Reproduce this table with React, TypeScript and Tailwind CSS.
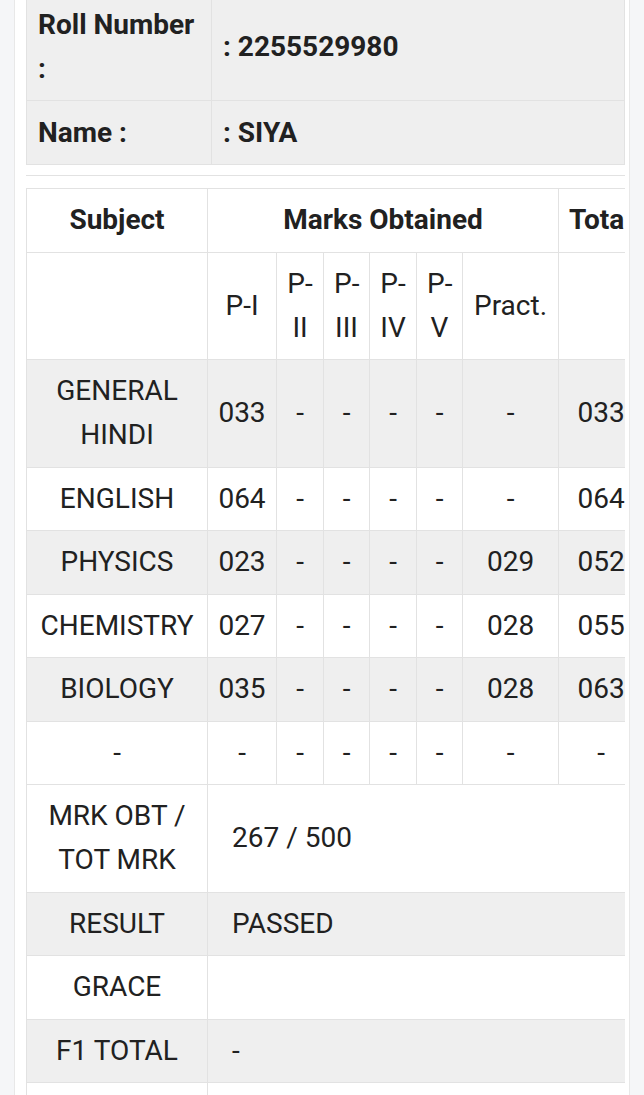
const papers = ['P-I', 'P-II', 'P-III', 'P-IV', 'P-V']

const subjects = [
    { name: 'GENERAL HINDI', p1: '033', pract: '-', total: '033' },
    { name: 'ENGLISH', p1: '064', pract: '-', total: '064' },
    { name: 'PHYSICS', p1: '023', pract: '029', total: '052' },
    { name: 'CHEMISTRY', p1: '027', pract: '028', total: '055' },
    { name: 'BIOLOGY', p1: '035', pract: '028', total: '063' },
    { name: '-', p1: '-', pract: '-', total: '-' },
]

const summary = [
    { label: 'MRK OBT / TOT MRK', value: '267 / 500' },
    { label: 'RESULT', value: 'PASSED' },
    { label: 'GRACE', value: '' },
    { label: 'F1 TOTAL', value: '-' },
    { label: '', value: '' },
]

const cell = 'border border-[#e2e2e2] px-[10px] py-[9.25px] text-center align-middle'

export default function App() {
    return (
        <div className="min-h-screen overflow-hidden bg-[#f5f6f8] px-[14px] text-[28px] leading-[44px] text-[#212121]" style={{ fontFamily: 'Roboto, "Noto Sans", Arial, sans-serif' }}>
            <div className="-mt-[8px] min-h-screen border-x border-[#e8e8e8] bg-white pl-[11px] pr-[4px]">
                {/* student info */}
                <table className="w-full table-fixed border-collapse font-bold">
                    <colgroup>
                        <col className="w-[185px]" />
                        <col />
                    </colgroup>
                    <tbody>
                        <tr className="bg-[#efefef]">
                            <td className="border border-[#e2e2e2] px-[11px] py-[9.5px] align-top">Roll Number :</td>
                            <td className="border border-[#e2e2e2] px-[11px] py-[9.5px] align-middle">: 2255529980</td>
                        </tr>
                        <tr className="bg-[#efefef]">
                            <td className="border border-[#e2e2e2] px-[11px] py-[9.5px]">Name :</td>
                            <td className="border border-[#e2e2e2] px-[11px] py-[9.5px]">: SIYA</td>
                        </tr>
                    </tbody>
                </table>
                <div className="h-[11px] border-b border-[#e2e2e2]" />

                {/* marks */}
                <div className="mt-[12px] overflow-hidden">
                    <table className="w-[621px] table-fixed border-collapse">
                        <colgroup>
                            <col className="w-[181px]" />
                            <col className="w-[69px]" />
                            <col className="w-[47px]" />
                            <col className="w-[46px]" />
                            <col className="w-[47px]" />
                            <col className="w-[46px]" />
                            <col className="w-[96px]" />
                            <col className="w-[89px]" />
                        </colgroup>
                        <thead>
                            <tr>
                                <th className={cell}>Subject</th>
                                <th className={cell} colSpan={6}>Marks Obtained</th>
                                <th className={`${cell} whitespace-nowrap text-left`}>Total</th>
                            </tr>
                            <tr>
                                <td className={cell} />
                                {papers.map(p => <td key={p} className={cell}>{p}</td>)}
                                <td className={cell}>Pract.</td>
                                <td className={cell} />
                            </tr>
                        </thead>
                        <tbody>
                            {subjects.map((s, i) => (
                                <tr key={i} className={i % 2 === 0 ? 'bg-[#efefef]' : 'bg-white'}>
                                    <td className={cell}>{s.name}</td>
                                    <td className={cell}>{s.p1}</td>
                                    <td className={cell}>-</td>
                                    <td className={cell}>-</td>
                                    <td className={cell}>-</td>
                                    <td className={cell}>-</td>
                                    <td className={cell}>{s.pract}</td>
                                    <td className={`${cell} pl-[6px]`}>{s.total}</td>
                                </tr>
                            ))}
                            {summary.map((r, i) => (
                                <tr key={i} className={i % 2 === 1 ? 'bg-[#efefef]' : 'bg-white'}>
                                    <td className={cell}>{r.label || '\u00a0'}</td>
                                    <td className="border border-[#e2e2e2] py-[9.25px] pl-[24px] pr-[10px] text-left align-middle" colSpan={7}>{r.value}</td>
                                </tr>
                            ))}
                        </tbody>
                    </table>
                </div>
            </div>
        </div>
    )
}
